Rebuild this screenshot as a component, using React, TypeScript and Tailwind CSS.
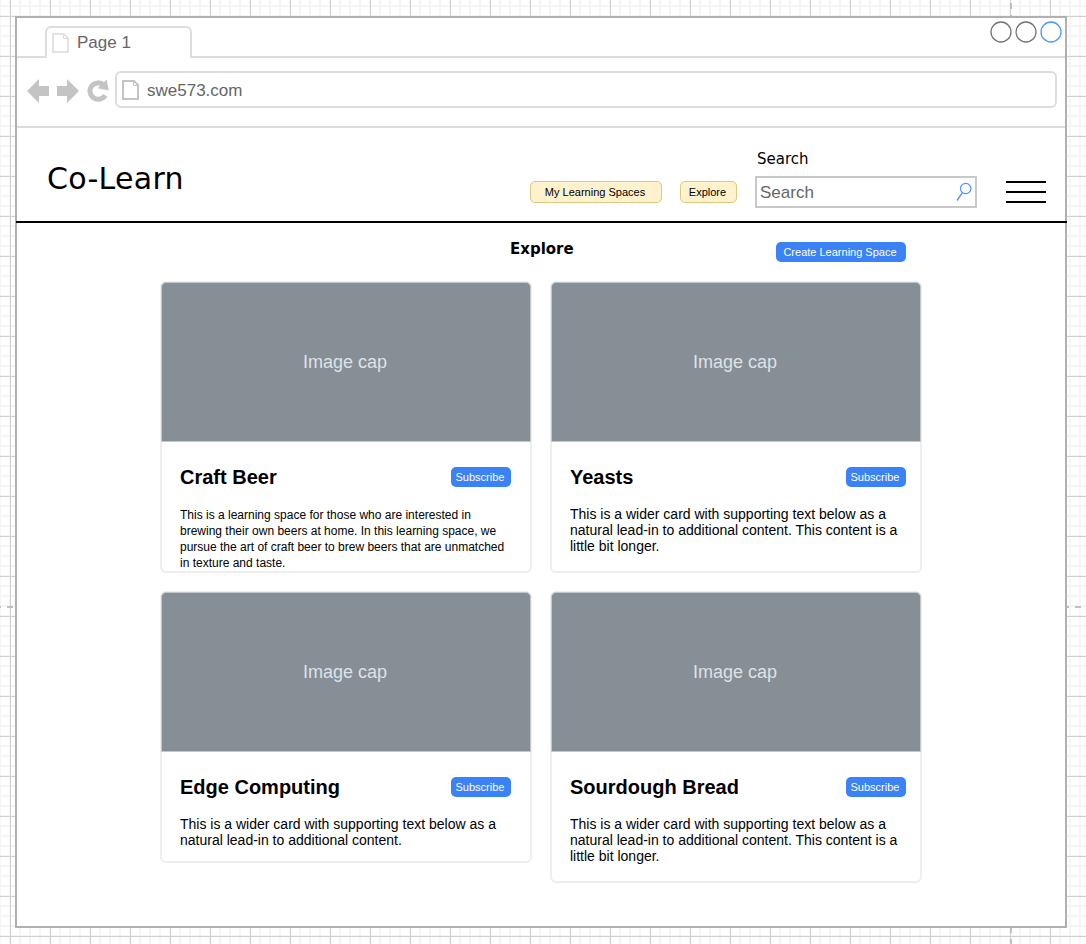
import React from "react";

type Space = {
  title: string;
  lines: string[];
  small?: boolean;
  height: string;
  button: string;
};

const leftColumn: Space[] = [
  {
    title: "Craft Beer",
    lines: [
      "This is a learning space for those who are interested in",
      "brewing their own beers at home. In this learning space, we",
      "pursue the art of craft beer to brew beers that are unmatched",
      "in texture and taste.",
    ],
    small: true,
    height: "h-[292px]",
    button: "mr-[19px]",
  },
  {
    title: "Edge Computing",
    lines: [
      "This is a wider card with supporting text below as a",
      "natural lead-in to additional content.",
    ],
    height: "h-[272px]",
    button: "mr-[19px]",
  },
];

const widerText = [
  "This is a wider card with supporting text below as a",
  "natural lead-in to additional content. This content is a",
  "little bit longer.",
];

const rightColumn: Space[] = [
  { title: "Yeasts", lines: widerText, height: "h-[292px]", button: "mr-[14px]" },
  { title: "Sourdough Bread", lines: widerText, height: "h-[292px]", button: "mr-[14px]" },
];

function PageIcon({ className, light }: { className: string; light?: boolean }) {
  const stroke = light ? "#dadada" : "#c4c4c4";
  return (
    <svg
      className={className}
      viewBox="0 0 17 20"
      preserveAspectRatio="none"
      fill="none"
      stroke={stroke}
      strokeWidth={light ? 1.5 : 2}
    >
      <path d="M1 1H12L16 5V19H1Z" />
      <path d="M11.5 1.5V5.5H15.5" strokeWidth="1" />
    </svg>
  );
}

function SpaceCard({ space }: { space: Space }) {
  return (
    <article className={`w-[372px] rounded-[6px] border-2 border-[#eeeeee] bg-white ${space.height}`}>
      <div className="-mx-px -mt-px flex h-[160px] justify-center rounded-t-[5px] border border-[#c4c8ca] bg-[#868e96] pr-[2px] pt-[69px] text-[18px] leading-[20px] text-[#dee2e6]">
        Image cap
      </div>
      <div className="mt-[25px] flex h-[20px] items-center justify-between pl-[18px]">
        <h2 className="whitespace-nowrap text-[20px] font-bold leading-[20px]">{space.title}</h2>
        <button className={`h-[20px] w-[60px] shrink-0 rounded-[5px] bg-[#3b82f6] pr-[2px] text-[11px] leading-[20px] text-white ${space.button}`}>
          Subscribe
        </button>
      </div>
      <p className={`mt-[19px] pl-[18px] leading-[16px] ${space.small ? "pt-px text-[12px]" : "text-[14px]"}`}>
        {space.lines.map((line) => (
          <span key={line} className="block whitespace-nowrap">
            {line}
          </span>
        ))}
      </p>
    </article>
  );
}

function BrowserChrome() {
  return (
    <>
      <div className="flex h-[40px] justify-between border-b-2 border-[#dddddd] pl-[28px] pr-[3px]">
        <div className="-mb-[2px] mt-[8px] flex h-[32px] w-[147px] rounded-t-[6px] border-2 border-b-0 border-[#dddddd] bg-white pl-[5px] text-[17px] text-[#666666]">
          <PageIcon light className="mt-[5px] h-[20px] w-[17px]" />
          <span className="ml-[8px] mt-[5px] leading-[20px]">Page 1</span>
        </div>
        <svg className="mt-[3px] h-[22px] w-[72px]" viewBox="0 0 72 22" fill="none" strokeWidth="1.3">
          <circle cx="11" cy="11" r="10" stroke="#737373" />
          <circle cx="36" cy="11" r="10" stroke="#737373" />
          <circle cx="61" cy="11" r="10" stroke="#4d94ff" />
        </svg>
      </div>
      <div className="flex h-[70px] border-b-2 border-[#dddddd] pl-[10px] pt-[13px]">
        <svg className="mt-[7px] h-[26px] w-[82px] shrink-0" viewBox="0 0 82 26" fill="#c4c4c4">
          <path d="M0 13 12 1V8H22V18H12V25Z" />
          <path d="M52 13 40 1V8H30V18H40V25Z" />
          <path d="M78.3 17.2A8.2 8.2 0 1 1 76.6 6.9" fill="none" stroke="#c4c4c4" strokeWidth="5" />
          <path d="M79.6 1.5 81.8 12.6 70.6 10.2Z" />
        </svg>
        <div className="ml-[6px] flex h-[37px] w-[942px] shrink-0 rounded-[6px] border-2 border-[#dddddd] pl-[5px] text-[17px] text-[#666666]">
          <PageIcon className="mt-[7px] h-[20px] w-[17px]" />
          <span className="ml-[8px] mt-[8px] leading-[20px]">swe573.com</span>
        </div>
      </div>
    </>
  );
}

function SiteHeader() {
  return (
    <header className="-mx-px flex h-[95px] w-[1051px] border-b-2 border-black text-black">
      <h1 className="ml-[31px] mt-[31px] w-[483px] font-['DejaVu_Sans',sans-serif] text-[30px] leading-[40px] tracking-[0.3px]">
        Co-Learn
      </h1>
      <button className="mt-[53px] h-[22px] w-[132px] rounded-[5px] border-[1.5px] border-[#e0c880] bg-[#fff2cc] pr-[2px] text-[11px] leading-[20px]">
        My Learning Spaces
      </button>
      <button className="ml-[18px] mt-[53px] h-[22px] w-[57px] rounded-[5px] border-[1.5px] border-[#e0c880] bg-[#fff2cc] pr-[2px] text-[11px] leading-[20px]">
        Explore
      </button>
      <div className="ml-[18px] mt-[21px] w-[222px]">
        <label className="block pl-[2px] font-['DejaVu_Sans',sans-serif] text-[15px] leading-[20px]">Search</label>
        <div className="mt-[7px] flex h-[32px] w-[222px] items-center justify-between border-2 border-[#c8c8c8] px-[3px] text-[17px] text-[#666666]">
          <span className="pt-[2px]">Search</span>
          <svg className="h-[20px] w-[16px]" viewBox="0 0 16 20" fill="none" stroke="#4d94ff" strokeWidth="1.2">
            <circle cx="9.7" cy="6.5" r="5.2" />
            <path d="M6.4 10.6 1 18.5" strokeWidth="1.4" />
          </svg>
        </div>
      </div>
      <div className="ml-[29px] mt-[53px] flex h-[22px] w-[40px] flex-col justify-between">
        <div className="h-[2px] bg-black" />
        <div className="h-[2px] bg-black" />
        <div className="h-[2px] bg-black" />
      </div>
    </header>
  );
}

export default function App() {
  return (
    <div className="relative h-[944px] w-[1086px] overflow-hidden bg-white pl-[15px] pt-[16px] font-['Liberation_Sans',Arial,sans-serif]">
      <div className="absolute inset-0 bg-[linear-gradient(to_right,#f5f5f5_2px,transparent_2px),linear-gradient(to_bottom,#f5f5f5_2px,transparent_2px)] bg-[size:10px_10px] bg-[position:9px_0px,0px_5px]" />
      <div className="absolute inset-0 bg-[linear-gradient(to_right,#d0d0d0_1px,transparent_1px),linear-gradient(to_bottom,#d0d0d0_1px,transparent_1px)] bg-[size:40px_40px] bg-[position:10px_0px,0px_16px]" />
      <svg className="absolute inset-0 h-[944px] w-[1086px]" viewBox="0 0 1086 944" stroke="#c0c0c0" strokeWidth="2">
        <path d="M1011 3V9M1011 15V16M1011 927V933M1011 939V944M0 607H1M7 607H13M1067 607H1069M1075 607H1081" />
      </svg>
      <main className="relative h-[912px] w-[1052px] border-2 border-[#b0b0b0] bg-white text-black">
        <BrowserChrome />
        <SiteHeader />
        <section className="pl-[143px]">
          <div className="flex h-[58px]">
            <h2 className="ml-[350px] mt-[16px] w-[266px] font-['DejaVu_Sans',sans-serif] text-[15px] font-bold leading-[20px]">
              Explore
            </h2>
            <button className="mt-[19px] h-[20px] w-[130px] rounded-[5px] bg-[#3b82f6] pr-[2px] text-[11px] leading-[20px] text-white">
              Create Learning Space
            </button>
          </div>
          <div className="flex items-start gap-[18px]">
            {[leftColumn, rightColumn].map((column, index) => (
              <div key={index} className="flex flex-col gap-[18px]">
                {column.map((space) => (
                  <SpaceCard key={space.title} space={space} />
                ))}
              </div>
            ))}
          </div>
        </section>
      </main>
    </div>
  );
}
